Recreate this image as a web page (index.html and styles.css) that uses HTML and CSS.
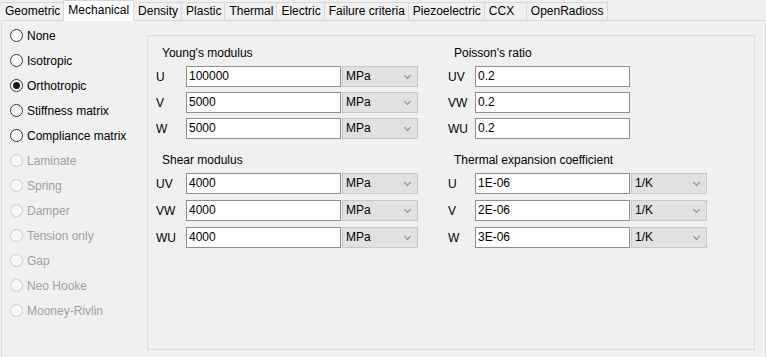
FILE: index.html
```html
<!DOCTYPE html>
<html>
<head>
<meta charset="utf-8">
<link rel="stylesheet" href="styles.css">
</head>
<body>
<div class="tabs">
  <div class="tab">Geometric</div>
  <div class="tab active">Mechanical</div>
  <div class="tab">Density</div>
  <div class="tab">Plastic</div>
  <div class="tab">Thermal</div>
  <div class="tab">Electric</div>
  <div class="tab">Failure criteria</div>
  <div class="tab">Piezoelectric</div>
  <div class="tab">CCX</div>
  <div class="tab">OpenRadioss</div>
</div>
<div class="page">
  <div class="radios">
    <div class="radio"><span class="dot"></span>None</div>
    <div class="radio"><span class="dot"></span>Isotropic</div>
    <div class="radio"><span class="dot checked"></span>Orthotropic</div>
    <div class="radio"><span class="dot"></span>Stiffness matrix</div>
    <div class="radio"><span class="dot"></span>Compliance matrix</div>
    <div class="radio disabled"><span class="dot"></span>Laminate</div>
    <div class="radio disabled"><span class="dot"></span>Spring</div>
    <div class="radio disabled"><span class="dot"></span>Damper</div>
    <div class="radio disabled"><span class="dot"></span>Tension only</div>
    <div class="radio disabled"><span class="dot"></span>Gap</div>
    <div class="radio disabled"><span class="dot"></span>Neo Hooke</div>
    <div class="radio disabled"><span class="dot"></span>Mooney-Rivlin</div>
  </div>
  <div class="group">
    <div class="section left">
      <div class="title">Young's modulus</div>
      <div class="row"><span class="lbl">U</span><div class="input">100000</div><div class="select">MPa<span class="chev"></span></div></div>
      <div class="row"><span class="lbl">V</span><div class="input">5000</div><div class="select">MPa<span class="chev"></span></div></div>
      <div class="row"><span class="lbl">W</span><div class="input">5000</div><div class="select">MPa<span class="chev"></span></div></div>
    </div>
    <div class="section right">
      <div class="title">Poisson's ratio</div>
      <div class="row"><span class="lbl">UV</span><div class="input">0.2</div></div>
      <div class="row"><span class="lbl">VW</span><div class="input">0.2</div></div>
      <div class="row"><span class="lbl">WU</span><div class="input">0.2</div></div>
    </div>
    <div class="section left second">
      <div class="title">Shear modulus</div>
      <div class="row"><span class="lbl">UV</span><div class="input">4000</div><div class="select">MPa<span class="chev"></span></div></div>
      <div class="row"><span class="lbl">VW</span><div class="input">4000</div><div class="select">MPa<span class="chev"></span></div></div>
      <div class="row"><span class="lbl">WU</span><div class="input">4000</div><div class="select">MPa<span class="chev"></span></div></div>
    </div>
    <div class="section right second">
      <div class="title">Thermal expansion coefficient</div>
      <div class="row"><span class="lbl">U</span><div class="input">1E-06</div><div class="select">1/K<span class="chev"></span></div></div>
      <div class="row"><span class="lbl">V</span><div class="input">2E-06</div><div class="select">1/K<span class="chev"></span></div></div>
      <div class="row"><span class="lbl">W</span><div class="input">3E-06</div><div class="select">1/K<span class="chev"></span></div></div>
    </div>
  </div>
</div>
</body>
</html>
```
FILE: styles.css
```css
html, body {
  margin: 0;
  padding: 0;
  background: #f0f0f0;
  font-family: "Liberation Sans", Arial, sans-serif;
  font-size: 12px;
  color: #000;
  height: 357px;
  overflow: hidden;
}
.tabs {
  display: flex;
  align-items: flex-end;
  height: 20px;
}
.tab {
  box-sizing: border-box;
  height: 18px;
  line-height: 17px;
  padding: 0 3px 0 4px;
  min-width: 43px;
  border: 1px solid #d9d9d9;
  border-bottom: none;
  margin-right: -1px;
  background: #f0f0f0;
  white-space: nowrap;
}
.tab:first-child {
  border-left: none;
  padding-left: 5px;
}
.tab.active {
  height: 21px;
  line-height: 18px;
  background: #ffffff;
  position: relative;
  z-index: 1;
  margin-bottom: -1px;
  padding: 0 4px 0 4px;
}
.page {
  box-sizing: border-box;
  margin-left: 1px;
  height: 337px;
  border: 1px solid #d9d9d9;
  border-bottom: none;
  display: flex;
  background: #f0f0f0;
}
.radios {
  width: 145px;
  padding: 2px 0 0 7px;
  box-sizing: border-box;
  flex: none;
}
.radio {
  height: 25px;
  display: flex;
  align-items: center;
  white-space: nowrap;
}
.dot {
  box-sizing: border-box;
  width: 13px;
  height: 13px;
  border-radius: 50%;
  border: 1px solid #333;
  background: #fff;
  margin-right: 4px;
  margin-left: 1px;
  display: flex;
  align-items: center;
  justify-content: center;
}
.dot.checked::after {
  content: "";
  width: 7px;
  height: 7px;
  border-radius: 50%;
  background: #1a1a1a;
}
.radio.disabled {
  color: #a0a0a0;
}
.radio.disabled .dot {
  border-color: #cccccc;
  background: #f7f7f7;
}
.group {
  box-sizing: border-box;
  margin-top: 14px;
  width: 608px;
  height: 315px;
  border: 1px solid #dcdcdc;
  padding: 9px 0 0 8px;
  display: grid;
  grid-template-columns: 261px 259px;
  column-gap: 31px;
  row-gap: 8px;
  align-content: start;
}
.title {
  height: 16px;
  line-height: 16px;
  padding-left: 6px;
  margin-bottom: 5px;
}
.row {
  display: flex;
  align-items: center;
  height: 21px;
  margin-bottom: 5px;
}
.second .row {
  margin-bottom: 6px;
}
.lbl {
  width: 30px;
  flex: none;
}
.right .lbl {
  width: 27px;
}
.input {
  box-sizing: border-box;
  width: 155px;
  height: 21px;
  line-height: 19px;
  border: 1px solid #8f8f8f;
  background: #fff;
  padding-left: 2px;
  flex: none;
}
.select {
  box-sizing: border-box;
  width: 76px;
  height: 21px;
  margin-left: 1px;
  line-height: 19px;
  border: 1px solid #c9c9c9;
  background: #e1e1e1;
  padding-left: 3px;
  display: flex;
  align-items: center;
  justify-content: space-between;
  padding-right: 7px;
  flex: none;
}
.chev {
  width: 4px;
  height: 4px;
  border-right: 1px solid #8a8a8a;
  border-bottom: 1px solid #8a8a8a;
  transform: rotate(45deg);
  margin-top: -3px;
}
```
